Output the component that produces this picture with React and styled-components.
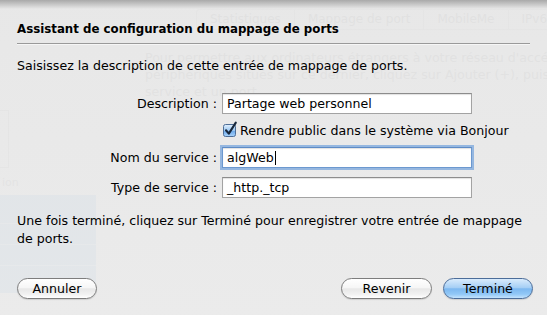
import React from "react";
import styled, { createGlobalStyle } from "styled-components";

const GlobalStyle = createGlobalStyle`
  html, body {
    margin: 0;
    padding: 0;
    background: #e8e8e8;
  }
  body {
    font-family: "DejaVu Sans", "Liberation Sans", sans-serif;
  }
`;

const tabs = ["Statistiques", "Mappage de port", "MobileMe", "IPv6"];

const ghostLines = [
  "Pour permettre aux ordinateurs étrangers à votre réseau d'accéder",
  "périphériques situés sur ce dernier, cliquez sur Ajouter (+), puis",
  "service et un port.",
];

const fields = [
  { id: "desc", label: "Description :", value: "Partage web personnel" },
  { id: "bonjour", checkbox: "Rendre public dans le système via Bonjour" },
  { id: "name", label: "Nom du service :", value: "algWeb", focused: true },
  { id: "type", label: "Type de service :", value: "_http._tcp" },
];

const CheckIcon = () => (
  <svg width="15" height="16" viewBox="0 0 15 16">
    <defs>
      <linearGradient id="cb" x1="0" y1="0" x2="0" y2="1">
        <stop offset="0" stopColor="#e3f0fd" />
        <stop offset="0.5" stopColor="#9cc8f2" />
        <stop offset="0.55" stopColor="#6eaaea" />
        <stop offset="1" stopColor="#a9d3fb" />
      </linearGradient>
    </defs>
    <rect x="0.5" y="3.5" width="12" height="12" rx="2" fill="url(#cb)" stroke="#4d6d96" />
    <path d="M3 9.3 L5.8 12.6 L12.8 1.6" fill="none" stroke="#17263a" strokeWidth="2.1" strokeLinecap="round" strokeLinejoin="round" />
  </svg>
);

const App = () => {
  return (
    <>
      <GlobalStyle />
      <Screen>
        <Backdrop>
          <TabBar>
            {tabs.map((t) => (
              <Tab key={t}>{t}</Tab>
            ))}
          </TabBar>
          <GhostBody>
            <GhostSide>
              <GhostBox />
              <GhostCaption>ion</GhostCaption>
              <GhostList>
                <GhostRow />
                <GhostRow />
                <GhostRow />
              </GhostList>
            </GhostSide>
            <GhostText>
              {ghostLines.map((l) => (
                <div key={l}>{l}</div>
              ))}
            </GhostText>
          </GhostBody>
        </Backdrop>

        <Sheet>
          <Title>Assistant de configuration du mappage de ports</Title>
          <Rule />
          <Intro>Saisissez la description de cette entrée de mappage de ports.</Intro>

          <Form>
            {fields.map((f) =>
              f.checkbox ? (
                <React.Fragment key={f.id}>
                  <span />
                  <CheckRow>
                    <CheckIcon />
                    <span>{f.checkbox}</span>
                  </CheckRow>
                </React.Fragment>
              ) : (
                <React.Fragment key={f.id}>
                  <Label>{f.label}</Label>
                  <Field $focused={f.focused}>
                    {f.value}
                    {f.focused && <Caret />}
                  </Field>
                </React.Fragment>
              )
            )}
          </Form>

          <Note>
            Une fois terminé, cliquez sur Terminé pour enregistrer votre entrée de mappage de ports.
          </Note>

          <Buttons>
            <Button $w={80}>Annuler</Button>
            <Spacer />
            <Button $w={91}>Revenir</Button>
            <Button $w={90} $primary>Terminé</Button>
          </Buttons>
        </Sheet>
      </Screen>
    </>
  );
};

const Screen = styled.div`
  position: relative;
  width: 547px;
  height: 315px;
  overflow: hidden;
  background: #e6e6e6;
`;

const Backdrop = styled.div`
  display: flex;
  flex-direction: column;
  height: 100%;
  color: #c2c2c2;
  font-size: 12.6px;
`;

const TabBar = styled.div`
  display: flex;
  margin: 9px 0 0 196px;
  height: 19px;
  border: 1px solid #d6d6d6;
  border-right: none;
  border-radius: 4px 0 0 4px;
  font-size: 12px;
`;

const Tab = styled.div`
  padding: 0 13px;
  line-height: 19px;
  border-right: 1px solid #d6d6d6;
  white-space: nowrap;
`;

const GhostBody = styled.div`
  display: flex;
  flex: 1;
`;

const GhostSide = styled.div`
  width: 96px;
  flex-shrink: 0;
  display: flex;
  flex-direction: column;
`;

const GhostBox = styled.div`
  margin-top: 80px;
  width: 8px;
  height: 56px;
  border: 1px solid #d0d0d0;
  border-left: none;
`;

const GhostCaption = styled.div`
  margin-top: 8px;
  font-size: 11px;
  padding-left: 2px;
`;

const GhostList = styled.div`
  margin-top: 6px;
  height: 98px;
  background: #bccfe0;
  display: flex;
  flex-direction: column;
  justify-content: center;
  gap: 20px;
`;

const GhostRow = styled.div`
  height: 1px;
  background: #d2dde8;
`;

const GhostText = styled.div`
  margin: 19px 0 0 49px;
  line-height: 17px;
  white-space: nowrap;
`;

const Sheet = styled.div`
  position: absolute;
  inset: 0;
  display: flex;
  flex-direction: column;
  padding: 0 17px;
  background: linear-gradient(#a9a9a9 0, rgba(232, 232, 232, 0.8) 9px, rgba(236, 236, 236, 0.82) 100%);
  color: #000;
  font-size: 12.6px;
`;

const Title = styled.div`
  margin-top: 21px;
  font-weight: bold;
  font-size: 11.8px;
  line-height: 16px;
`;

const Rule = styled.div`
  margin-top: 6px;
  height: 1px;
  background: #9a9a9a;
  border-bottom: 1px solid #f6f6f6;
`;

const Intro = styled.div`
  margin-top: 12px;
  line-height: 17px;
`;

const Form = styled.div`
  display: grid;
  grid-template-columns: 200px 250px;
  column-gap: 5px;
  row-gap: 9px;
  margin-top: 19px;
  align-items: center;
`;

const Label = styled.div`
  text-align: right;
  white-space: nowrap;
`;

const Field = styled.div`
  height: 21px;
  box-sizing: border-box;
  padding: 0 4px;
  line-height: 19px;
  background: #fff;
  border: 1px solid ${(p) => (p.$focused ? "#6c98cf" : "#a3a3a3")};
  border-top-color: ${(p) => (p.$focused ? "#5d8bc6" : "#8c8c8c")};
  box-shadow: ${(p) =>
    p.$focused
      ? "0 0 0 2px rgba(120, 165, 220, 0.75), inset 0 1px 1px rgba(0,0,0,0.12)"
      : "inset 0 1px 1px rgba(0,0,0,0.12)"};
  white-space: nowrap;
`;

const Caret = styled.span`
  display: inline-block;
  width: 1px;
  height: 14px;
  margin-left: 1px;
  vertical-align: -3px;
  background: #000;
`;

const CheckRow = styled.label`
  display: flex;
  align-items: center;
  gap: 2px;
  height: 15px;
  margin-left: 1px;
  white-space: nowrap;
  svg {
    flex-shrink: 0;
    margin-top: -4px;
  }
`;

const Note = styled.div`
  margin: 14px -8px 0 0;
  line-height: 18px;
`;

const Buttons = styled.div`
  display: flex;
  gap: 11px;
  margin: auto -3px 16px 0;
`;

const Spacer = styled.div`
  flex: 1;
`;

const Button = styled.button`
  width: ${(p) => p.$w}px;
  height: 21px;
  padding: 0;
  border-radius: 11px;
  font-family: inherit;
  font-size: 12.6px;
  color: #000;
  border: 1px solid ${(p) => (p.$primary ? "#4c6d99" : "#7d7d7d")};
  background: ${(p) =>
    p.$primary
      ? "linear-gradient(#d9ebfc 0%, #a6cff5 45%, #7db8f0 52%, #92c8f7 80%, #c4e3fd 100%)"
      : "linear-gradient(#ffffff 0%, #f6f6f6 45%, #e8e8e8 52%, #f1f1f1 80%, #ffffff 100%)"};
  box-shadow: 0 1px 1px rgba(0, 0, 0, 0.12);
`;

export default App;
